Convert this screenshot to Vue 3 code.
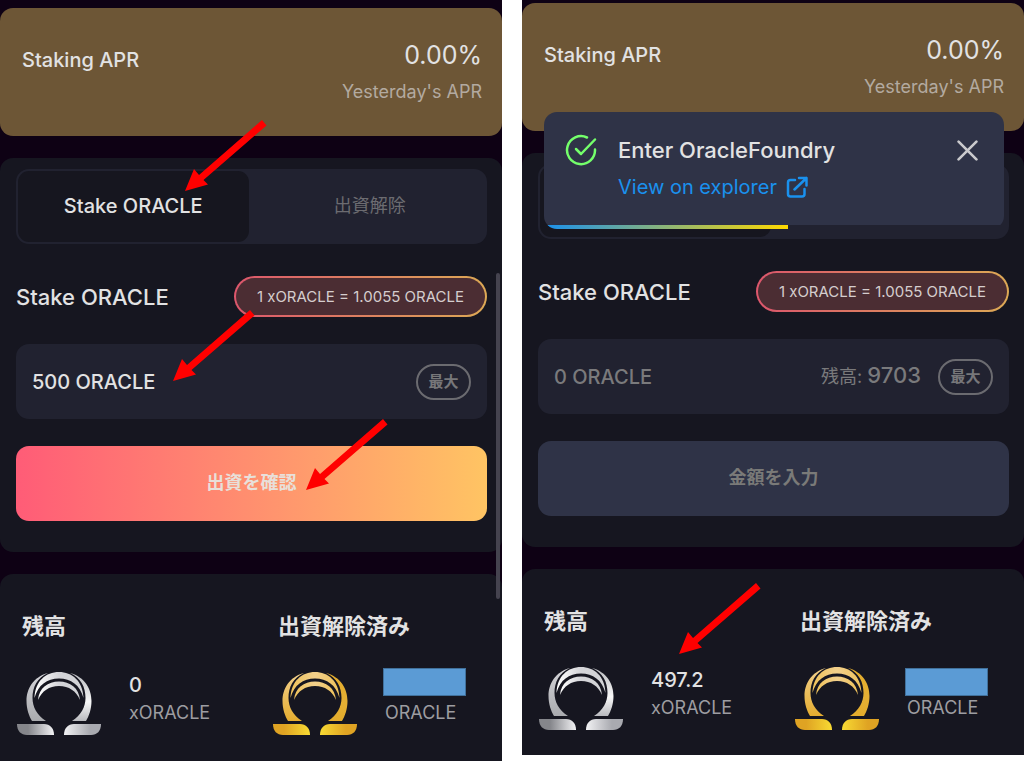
<script setup>
import { reactive } from 'vue'

const screens = reactive([
  {
    id: 'before',
    amount: '500 ORACLE',
    balance: '',
    action: '出資を確認',
    ready: true,
    toast: false,
    received: '0',
    arrows: ['stake-tab', 'amount', 'confirm'],
  },
  {
    id: 'after',
    amount: '',
    balance: '9703',
    action: '金額を入力',
    ready: false,
    toast: true,
    received: '497.2',
    arrows: ['received'],
  },
])

const tabs = ['Stake ORACLE', '出資解除']

const metals = {
  silver: { ring: ['#d4d4d8', '#a9aaae', '#ffffff', '#b9babe'], foot: ['#85868b', '#f2f2f4', '#a9aab0'] },
  gold: { ring: ['#f2d08c', '#e5ad30', '#efc25a', '#e3ac2c'], foot: ['#dfa323', '#f8da33', '#dfa323'] },
}

const holdings = [
  { title: '残高', metal: 'silver', unit: 'xORACLE' },
  { title: '出資解除済み', metal: 'gold', unit: 'ORACLE' },
]
</script>

<template>
  <main class="steps">
    <section v-for="s in screens" :key="s.id" class="screen" :class="s.id">
      <div class="apr">
        <span class="apr-name">Staking APR</span>
        <div class="apr-values">
          <strong>0.00%</strong>
          <span>Yesterday's APR</span>
        </div>
      </div>

      <div class="card stake">
        <div class="tabs" role="tablist">
          <button
            v-for="(t, i) in tabs"
            :key="t"
            type="button"
            role="tab"
            class="tab"
            :class="{ active: i === 0 }"
            :aria-selected="i === 0"
            :aria-label="t"
          ><template v-if="!s.toast">{{ t }}</template></button>
        </div>
        <div class="heading">
          <h2><label :for="'amount-' + s.id">Stake ORACLE</label></h2>
          <span class="rate">1 xORACLE = 1.0055 ORACLE</span>
        </div>
        <div class="field">
          <input :id="'amount-' + s.id" v-model="s.amount" type="text" placeholder="0 ORACLE" />
          <span v-if="s.balance" class="balance">残高: <b>{{ s.balance }}</b></span>
          <button type="button" class="max">最大</button>
        </div>
        <button type="button" class="submit" :class="{ ready: s.ready }">{{ s.action }}</button>
      </div>

      <div class="card holdings">
        <div v-for="h in holdings" :key="h.title" class="holding">
          <h3>{{ h.title }}</h3>
          <div class="token">
            <svg class="omega" viewBox="0 0 84 63" aria-hidden="true">
              <defs>
                <linearGradient :id="`top-${h.metal}-${s.id}`" x1="0" y1="0" x2="1" y2="0">
                  <stop offset="0" :stop-color="h.metal === 'gold' ? '#efc25a' : '#ffffff'" />
                  <stop offset="0.5" :stop-color="metals[h.metal].ring[0]" />
                  <stop offset="1" :stop-color="h.metal === 'gold' ? '#efc25a' : '#d2d3d6'" />
                </linearGradient>
                <linearGradient :id="`left-${h.metal}-${s.id}`" x1="0" y1="0" x2="0" y2="1">
                  <stop offset="0" :stop-color="metals[h.metal].ring[0]" />
                  <stop offset="1" :stop-color="metals[h.metal].ring[1]" />
                </linearGradient>
                <linearGradient :id="`right-${h.metal}-${s.id}`" x1="0" y1="0" x2="0" y2="1">
                  <stop offset="0" :stop-color="metals[h.metal].ring[3]" />
                  <stop offset="0.6" :stop-color="h.metal === 'gold' ? '#e5b034' : '#f8f8f8'" />
                  <stop offset="1" :stop-color="metals[h.metal].ring[3]" />
                </linearGradient>
                <linearGradient :id="`foot-l-${h.metal}-${s.id}`">
                  <stop offset="0.3" :stop-color="metals[h.metal].foot[0]" />
                  <stop offset="1" :stop-color="metals[h.metal].foot[1]" />
                </linearGradient>
                <linearGradient :id="`foot-r-${h.metal}-${s.id}`">
                  <stop offset="0" :stop-color="metals[h.metal].foot[1]" />
                  <stop offset="0.7" :stop-color="metals[h.metal].foot[2]" />
                </linearGradient>
              </defs>
              <path :fill="`url(#left-${h.metal}-${s.id})`" d="M31 1C16 5 9.500 17 9.500 29C9.500 37 12 44 15 49H29C20 43 15.500 35 15.500 26C15.500 15 20 6 31 1Z" />
              <path :fill="`url(#right-${h.metal}-${s.id})`" d="M53 1C68 5 74.500 17 74.500 29C74.500 37 72 44 69 49H55C64 43 68.500 35 68.500 26C68.500 15 64 6 53 1Z" />
              <path :fill="`url(#top-${h.metal}-${s.id})`" d="M17.500 26C18 9 29 0 42 0C55 0 66 9 66.500 26C63 13 54 6.500 42 6.500C30 6.500 21 13 17.500 26Z" />
              <path :fill="`url(#top-${h.metal}-${s.id})`" d="M21 28C22 16 31 9.500 42 9.500C53 9.500 62 16 63 28C59 19 52 14 42 14C32 14 25 19 21 28Z" />
              <path :fill="`url(#foot-l-${h.metal}-${s.id})`" d="M0 52H27C33 52 37 56 37 63H10C4 63 0 59 0 52Z" />
              <path :fill="`url(#foot-r-${h.metal}-${s.id})`" d="M84 52H57C51 52 47 56 47 63H74C80 63 84 59 84 52Z" />
            </svg>
            <div class="quantity">
              <strong v-if="h.metal === 'silver'">{{ s.received }}</strong>
              <i v-else class="mask"></i>
              <span>{{ h.unit }}</span>
            </div>
          </div>
        </div>
      </div>

      <div v-if="s.toast" class="toast" role="status">
        <div class="toast-body">
          <svg class="ok" viewBox="0 0 32 32" aria-hidden="true">
            <path d="M22 3.500A14 14 0 1 0 30 15.500" />
            <path d="M11 15L16 20L30 5.500" />
          </svg>
          <div class="toast-text">
            <p>Enter OracleFoundry</p>
            <a href="#explorer">View on explorer
              <svg class="external" viewBox="0 0 22 22" aria-hidden="true">
                <path d="M9 4H4.500Q2 4 2 6.500V18Q2 20.500 4.500 20.500H16Q18.500 20.500 18.500 18V13" />
                <path d="M13 2H20.500V9.500M20.500 2L8.500 13.500" />
              </svg>
            </a>
          </div>
          <button type="button" class="close" aria-label="Close">
            <svg viewBox="0 0 20 20" aria-hidden="true"><path d="M1.500 1.500L18.500 18.500M18.500 1.500L1.500 18.500" /></svg>
          </button>
        </div>
        <div class="timer"></div>
      </div>

      <div v-else class="scrollbar"></div>

      <svg v-for="a in s.arrows" :key="a" class="arrow" :class="a" viewBox="0 0 82 72" aria-hidden="true">
        <polygon points="0,71 9,49 14,55 77,0 81.500,5.500 18.500,60 23,64.500" />
      </svg>
    </section>
  </main>
</template>

<style>
body {
  margin: 0;
  background: #fff;
}
</style>

<style scoped>
.steps {
  display: grid;
  grid-template-columns: 1fr 1fr;
  gap: 20px;
  min-height: 100vh;
  font-family: Inter, "Noto Sans CJK JP", sans-serif;
  color: #e2e2e3;
}
.steps * {
  box-sizing: border-box;
}
button, input {
  font: inherit;
  color: inherit;
  border: 0;
  margin: 0;
  padding: 0;
  background: none;
}
h2, h3, p {
  margin: 0;
}
.screen {
  position: relative;
  display: flex;
  flex-direction: column;
  gap: 22px;
  padding-top: 8px;
  background: #0e0114;
  overflow: hidden;
}
.screen.after {
  align-self: start;
  padding-top: 3px;
}
.apr {
  display: flex;
  justify-content: space-between;
  height: 128px;
  padding: 29px 20px 0 22px;
  border-radius: 13px;
  background: #6d5636;
}
.apr-name {
  font-size: 20px;
  font-weight: 500;
  line-height: 46px;
}
.apr-values {
  display: flex;
  flex-direction: column;
  text-align: right;
}
.apr-values strong {
  font-size: 25px;
  font-weight: 400;
  line-height: 36px;
}
.apr-values span {
  font-size: 18px;
  font-weight: 400;
  line-height: 38px;
  color: #b3aaa0;
}
.card {
  border-radius: 13px;
  background: #161620;
}
.stake {
  display: flex;
  flex-direction: column;
  padding: 11px 15px 31px 16px;
}
.tabs {
  display: grid;
  grid-template-columns: 1fr 1fr;
  gap: 6px;
  height: 75px;
  padding: 2px;
  border-radius: 13px;
  background: #212230;
}
.tab {
  padding-bottom: 5px;
  border-radius: 11px;
  font-size: 18px;
  font-weight: 400;
  color: #6c6c71;
}
.tab.active {
  padding-bottom: 2px;
  background: #16161f;
  font-size: 20px;
  font-weight: 500;
  color: #e2e2e3;
}
.heading {
  display: flex;
  justify-content: space-between;
  align-items: center;
  margin: 32px 0 27px;
}
h2 {
  font-size: 22px;
  font-weight: 500;
}
.rate {
  display: flex;
  align-items: center;
  justify-content: center;
  height: 41px;
  padding: 0 21px;
  border: 2px solid transparent;
  border-radius: 21px;
  background:
    linear-gradient(#4b2d33, #4b2d33) padding-box,
    linear-gradient(90deg, #dc566c, #dda955) border-box;
  font-size: 15px;
  font-weight: 400;
  white-space: nowrap;
  color: #d5cdce;
}
.field {
  display: flex;
  align-items: center;
  height: 75px;
  padding: 0 16px;
  border-radius: 13px;
  background: #212230;
}
.field input {
  flex: 1;
  min-width: 0;
  font-size: 20px;
  font-weight: 500;
  outline: 0;
}
.field input::placeholder {
  color: #7a7a7c;
  opacity: 1;
}
.balance {
  margin-right: 17px;
  padding-bottom: 3px;
  font-size: 18px;
  font-weight: 400;
  color: #7a7a7c;
}
.balance b {
  font-size: 22px;
  font-weight: 500;
}
.max {
  width: 55px;
  height: 36px;
  padding-bottom: 3px;
  border: 2px solid #6b6b70;
  border-radius: 18px;
  font-size: 15px;
  font-weight: 700;
  color: #77777a;
}
.submit {
  height: 75px;
  margin-top: 27px;
  padding-bottom: 6px;
  border-radius: 13px;
  background: #2f3347;
  font-size: 18px;
  font-weight: 700;
  color: #7a7a78;
}
.submit.ready {
  background: linear-gradient(90deg, #ff5c77, #ff946e 55%, #ffc463);
  color: #e8e0da;
}
.holdings {
  flex: 1;
  display: grid;
  grid-template-columns: 51% 49%;
  border-radius: 13px 13px 0 0;
}
.holding {
  padding: 35px 0 25px 17px;
}
h3 {
  padding-left: 5px;
  font-size: 22px;
  font-weight: 700;
  line-height: 34px;
}
.token {
  display: flex;
  align-items: center;
  gap: 28px;
  margin-top: 29px;
}
.omega {
  width: 84px;
  height: 63px;
}
.quantity {
  position: relative;
  display: flex;
  flex-direction: column;
  height: 63px;
}
.quantity strong, .mask {
  height: 27px;
  font-size: 20px;
  font-weight: 500;
  line-height: 27px;
}
.quantity span {
  font-size: 18px;
  font-weight: 400;
  line-height: 27px;
  color: #9d9da1;
}
.mask::before {
  content: "";
  box-sizing: border-box;
  position: absolute;
  top: -4px;
  left: -2px;
  width: 83px;
  height: 28px;
  border: 1px solid #41719c;
  background: #5b9bd5;
}
.after .mask::before {
  top: 1px;
}
.toast {
  position: absolute;
  top: 112px;
  left: 22px;
  right: 20px;
  border-radius: 13px;
  overflow: hidden;
}
.toast-body {
  display: flex;
  align-items: flex-start;
  height: 113px;
  padding: 22px 26px 0 21px;
  background: #2f3347;
}
.ok {
  width: 32px;
  height: 32px;
  stroke: #74ff6b;
}
.ok, .external, .close svg {
  fill: none;
  stroke-width: 2.500;
  stroke-linecap: round;
  stroke-linejoin: round;
}
.toast-text {
  flex: 1;
  padding-left: 21px;
}
.toast-text p {
  font-size: 22px;
  font-weight: 500;
  line-height: 32px;
}
.toast-text a {
  display: flex;
  align-items: center;
  gap: 9px;
  font-size: 20px;
  line-height: 42px;
  color: #1a91ee;
  text-decoration: none;
}
.external {
  width: 22px;
  height: 22px;
  stroke: #1a91ee;
}
.close {
  display: flex;
  margin-top: 6px;
}
.close svg {
  width: 21px;
  height: 21px;
  stroke: #c9c9cc;
}
.timer {
  width: 53%;
  height: 4px;
  background: linear-gradient(90deg, #1a91ee, #ffd900);
}
.scrollbar {
  position: absolute;
  top: 273px;
  right: 2px;
  width: 4px;
  height: 326px;
  border-radius: 2px;
  background: #45434f;
}
.arrow {
  position: absolute;
  width: 82px;
  height: 72px;
  fill: #f00;
}
.arrow.stake-tab {
  top: 120px;
  left: 185px;
}
.arrow.amount {
  top: 310px;
  left: 173px;
}
.arrow.confirm {
  top: 419px;
  left: 306px;
}
.arrow.received {
  top: 583px;
  left: 157px;
}
</style>
